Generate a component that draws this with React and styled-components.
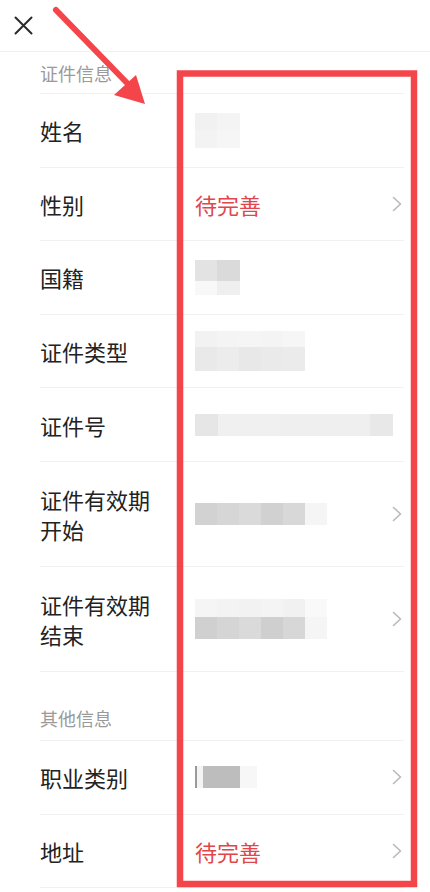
import React from "react";
import styled, { createGlobalStyle } from "styled-components";

const GlobalStyle = createGlobalStyle`
  html, body {
    margin: 0;
    padding: 0;
    background: #ffffff;
  }
  body {
    font-family: "Noto Sans CJK SC", "Noto Sans", sans-serif;
    -webkit-font-smoothing: antialiased;
  }
`;

const sections = [
  {
    title: "证件信息",
    top: 0,
    rows: [
      { label: ["姓名"], blur: "name" },
      { label: ["性别"], pending: true, arrow: true },
      { label: ["国籍"], blur: "nation" },
      { label: ["证件类型"], blur: "type" },
      { label: ["证件号"], blur: "number" },
      { label: ["证件有效期", "开始"], blur: "start", arrow: true },
      { label: ["证件有效期", "结束"], blur: "end", arrow: true },
    ],
  },
  {
    title: "其他信息",
    top: 1,
    rows: [
      { label: ["职业类别"], blur: "job", arrow: true },
      { label: ["地址"], pending: true, arrow: true },
    ],
  },
];

// mosaic cells: [width, colour] per line, line height given separately
const mosaics = {
  name: [
    { h: 17, cells: [[22, "#f1f1f1"], [23, "#f4f4f4"]] },
    { h: 18, cells: [[22, "#f3f3f3"], [23, "#f6f6f6"]] },
  ],
  nation: [
    { h: 21, cells: [[22, "#e3e3e3"], [23, "#dadada"]] },
    { h: 14, cells: [[22, "#f8f8f8"], [23, "#efefef"]] },
  ],
  type: [
    { h: 16, cells: [[22, "#f2f2f2"], [22, "#f4f4f4"], [22, "#f5f5f5"], [22, "#f4f4f4"], [22, "#f6f6f6"]] },
    { h: 24, cells: [[22, "#e9e9e9"], [22, "#ececec"], [22, "#e8e8e8"], [22, "#eaeaea"], [22, "#ebebeb"]] },
  ],
  number: [
    { h: 22, cells: [[23, "#e6e6e6"], [62, "#f0f0f0"], [90, "#efefef"], [23, "#e8e8e8"]] },
  ],
  start: [
    { h: 22, cells: [[22, "#d2d2d2"], [22, "#d6d6d6"], [22, "#dadada"], [22, "#d1d1d1"], [22, "#d8d8d8"], [22, "#f5f5f5"]] },
  ],
  end: [
    { h: 18, cells: [[22, "#f5f5f5"], [22, "#f3f3f3"], [22, "#f2f2f2"], [22, "#f4f4f4"], [22, "#f1f1f1"], [22, "#f9f9f9"]] },
    { h: 22, cells: [[22, "#d0d0d0"], [22, "#d5d5d5"], [22, "#dadada"], [22, "#cfcfcf"], [22, "#d7d7d7"], [22, "#f5f5f5"]] },
  ],
  job: [
    { h: 22, cells: [[2, "#9a9a9a"], [6, "#f4f4f4"], [37, "#bdbdbd"], [17, "#f7f7f7"]] },
  ],
};

function Mosaic({ kind }) {
  return (
    <MosaicBox>
      {mosaics[kind].map((line, i) => (
        <MosaicLine key={i} $h={line.h}>
          {line.cells.map(([w, c], j) => (
            <Cell key={j} $w={w} $c={c} />
          ))}
        </MosaicLine>
      ))}
    </MosaicBox>
  );
}

function Chevron() {
  return (
    <ChevronIcon width="10" height="16" viewBox="0 0 10 16">
      <polyline points="1.5,1.5 8.5,8 1.5,14.5" fill="none" stroke="#b9b9b9" strokeWidth="1.6" strokeLinecap="round" strokeLinejoin="round" />
    </ChevronIcon>
  );
}

export default function App() {
  return (
    <Page>
      <GlobalStyle />
      <Header>
        <svg width="19" height="19" viewBox="0 0 19 19">
          <path d="M1.5 1.5 L17.5 17.5 M17.5 1.5 L1.5 17.5" stroke="#2b2b2b" strokeWidth="2" strokeLinecap="round" />
        </svg>
      </Header>

      <List>
        {sections.map((s) => (
          <React.Fragment key={s.title}>
            <SectionTitle $later={s.top}>{s.title}</SectionTitle>
            {s.rows.map((r) => (
              <Row key={r.label.join("")} $tall={r.label.length > 1}>
                <Label>
                  {r.label.map((l) => (
                    <span key={l}>{l}</span>
                  ))}
                </Label>
                <Value>
                  {r.pending ? <Pending>待完善</Pending> : <Mosaic kind={r.blur} />}
                </Value>
                {r.arrow && <Chevron />}
              </Row>
            ))}
          </React.Fragment>
        ))}
      </List>

      <Annotation width="430" height="892" viewBox="0 0 430 892">
        <rect x="180" y="73.5" width="234" height="810.5" fill="none" stroke="#f4454a" strokeWidth="6.5" />
        <line x1="56" y1="10" x2="128" y2="84" stroke="#f4454a" strokeWidth="6" strokeLinecap="round" />
        <polygon points="145,104 114,95 136,75" fill="#f4454a" />
      </Annotation>
    </Page>
  );
}

const Page = styled.div`
  position: relative;
  width: 430px;
  height: 892px;
  overflow: hidden;
  background: #ffffff;
`;

const Header = styled.div`
  height: 52px;
  display: flex;
  align-items: center;
  padding-left: 14px;
  border-bottom: 1px solid #f0f0f0;
  box-sizing: border-box;
`;

const List = styled.div`
  display: flex;
  flex-direction: column;
  margin: 0 26px 0 40px;
`;

const SectionTitle = styled.div`
  font-size: 18px;
  line-height: 20px;
  color: #9a9a9a;
  padding: ${(p) => (p.$later ? "36px 0 12px" : "11px 0 10px")};
  border-bottom: 1px solid #f0f0f0;
`;

const Row = styled.div`
  display: flex;
  align-items: center;
  height: ${(p) => (p.$tall ? "105px" : "73.6px")};
  box-sizing: border-box;
  border-bottom: 1px solid #f0f0f0;
`;

const Label = styled.div`
  width: 155px;
  flex-shrink: 0;
  display: flex;
  flex-direction: column;
  font-size: 22px;
  line-height: 30px;
  color: #222222;
`;

const Value = styled.div`
  flex: 1;
  display: flex;
  align-items: center;
`;

const Pending = styled.span`
  font-size: 22px;
  line-height: 30px;
  color: #e0464c;
`;

const MosaicBox = styled.div`
  display: flex;
  flex-direction: column;
`;

const MosaicLine = styled.div`
  display: flex;
  height: ${(p) => p.$h}px;
`;

const Cell = styled.div`
  width: ${(p) => p.$w}px;
  background: ${(p) => p.$c};
`;

const ChevronIcon = styled.svg`
  flex-shrink: 0;
  margin-right: 2px;
`;

const Annotation = styled.svg`
  position: absolute;
  top: 0;
  left: 0;
  pointer-events: none;
`;
